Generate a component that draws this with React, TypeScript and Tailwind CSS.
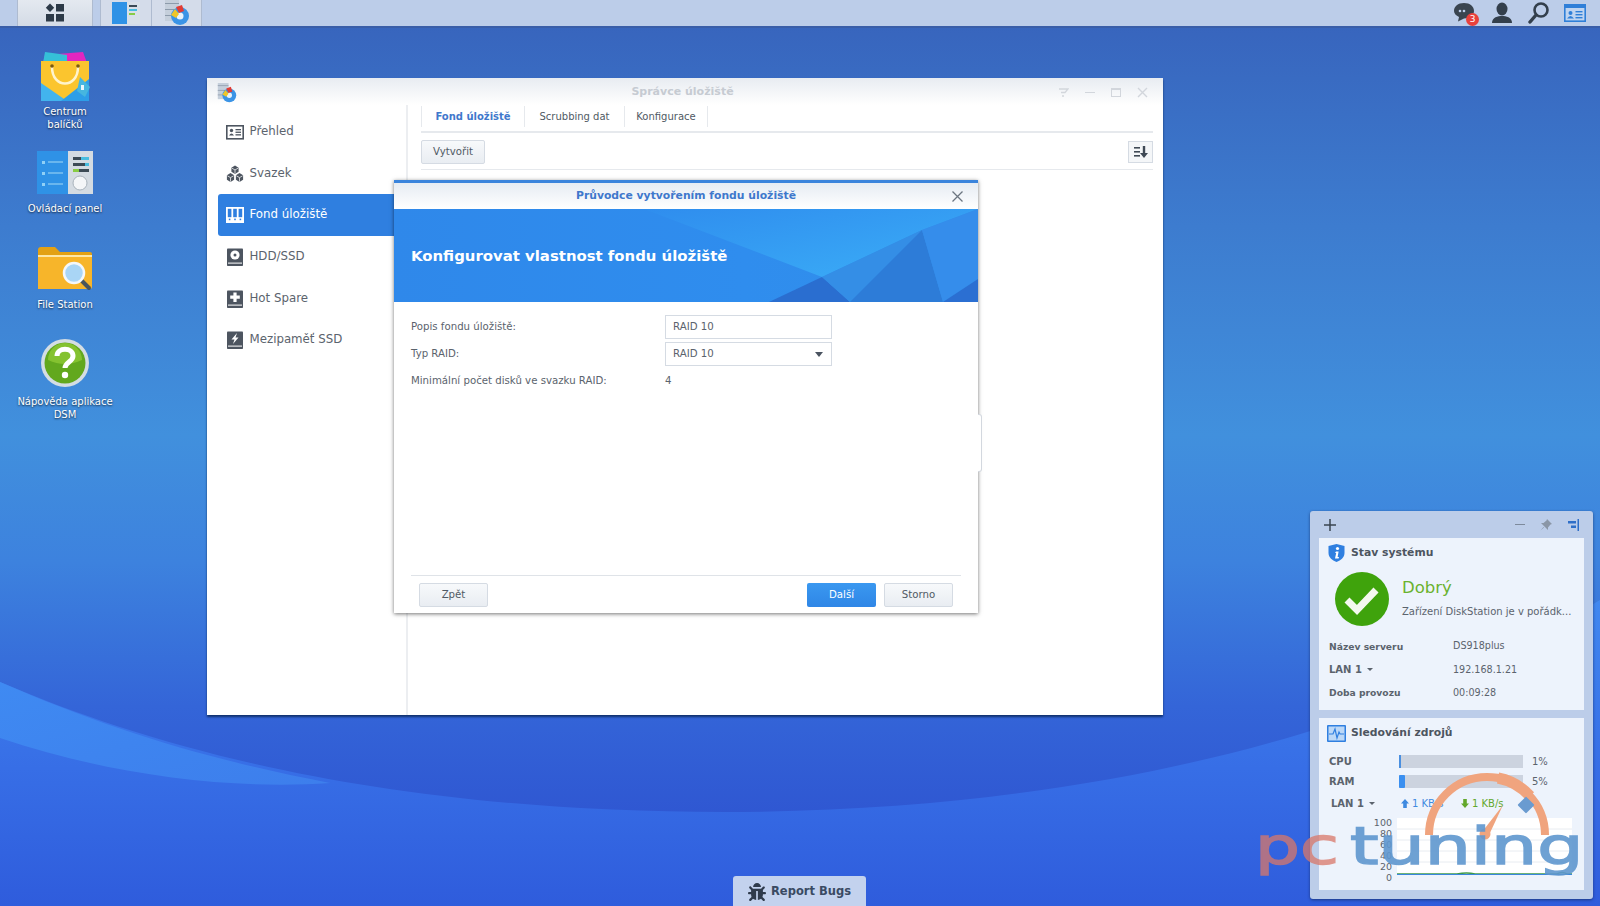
import { FaBug } from 'react-icons/fa';

const SIDEBAR_ITEMS = [
  { label: 'Přehled', icon: 'overview' },
  { label: 'Svazek', icon: 'volume' },
  { label: 'Fond úložiště', icon: 'pool', active: true },
  { label: 'HDD/SSD', icon: 'hdd' },
  { label: 'Hot Spare', icon: 'spare' },
  { label: 'Mezipaměť SSD', icon: 'cache' },
];

function Wallpaper() {
  return (
    <svg className="absolute inset-0 h-full w-full" viewBox="0 0 1600 906" preserveAspectRatio="none">
      <defs>
        <linearGradient id="sky" x1="0" y1="0" x2="0" y2="1">
          <stop offset="0" stopColor="#3762bb" />
          <stop offset="0.25" stopColor="#3d7ccf" />
          <stop offset="0.48" stopColor="#4190dd" />
          <stop offset="0.62" stopColor="#3d82de" />
          <stop offset="0.78" stopColor="#3465d8" />
          <stop offset="0.9" stopColor="#2f57d2" />
        </linearGradient>
        <linearGradient id="floor" x1="0" y1="0" x2="0" y2="1">
          <stop offset="0" stopColor="#4188f0" />
          <stop offset="0.55" stopColor="#376ee6" />
          <stop offset="1" stopColor="#2f5cdc" />
        </linearGradient>
        <linearGradient id="band" x1="0" y1="0" x2="1" y2="1">
          <stop offset="0" stopColor="#3f8af2" />
          <stop offset="1" stopColor="#3d7eec" />
        </linearGradient>
      </defs>
      <rect width="1600" height="906" fill="url(#sky)" />
      <path d="M0 682 C 170 755 400 812 724 812 C 980 812 1180 772 1320 728 C 1420 695 1520 650 1600 600 L1600 906 L0 906 Z" fill="url(#floor)" />
      <path d="M0 682 C 110 730 210 760 330 783 C 230 790 110 775 0 738 Z" fill="url(#band)" />
    </svg>
  );
}

function PackageIcon() {
  return (
    <svg width="58" height="54" viewBox="0 0 56 54">
      <path d="M8 6 L46 3 L50 14 L6 14 Z" fill="#e326c0" />
      <path d="M8 3 L30 6 L30 14 L6 14 Z" fill="#35c0d8" />
      <path d="M4 12 H52 V52 H4 Z" fill="#fbc52e" />
      <path d="M4 34 L30 52 H4 Z" fill="#42b4ee" />
      <path d="M24 52 L52 30 V52 Z" fill="#2d9ee8" />
      <path d="M15 18 C15 40 41 40 41 18" fill="none" stroke="#fff4cc" strokeWidth="2.5" />
      <circle cx="15" cy="17" r="1.8" fill="#7a5a10" />
      <circle cx="41" cy="17" r="1.8" fill="#7a5a10" />
      <path d="M43 28 L53 38 L48 48 L40 42 Z" fill="#46b6df" />
      <rect x="44" y="36" width="3" height="5" fill="#e8f6fc" />
    </svg>
  );
}

function ControlPanelIcon() {
  return (
    <svg width="56" height="44" viewBox="0 0 56 44">
      <rect x="0" y="0" width="31" height="43" fill="#2f92e6" />
      <rect x="31" y="0" width="25" height="43" fill="#d4dbe2" />
      {[10, 21, 32].map((y) => (
        <g key={y}>
          <rect x="5" y={y} width="3" height="3" fill="#8fd0f6" />
          <rect x="11" y={y} width="15" height="2" fill="#69b6ee" />
        </g>
      ))}
      <rect x="36" y="6" width="8" height="3" fill="#3c4a55" />
      <rect x="44" y="6" width="8" height="3" fill="#48bde0" />
      <rect x="36" y="12" width="12" height="3" fill="#3c4a55" />
      <rect x="48" y="12" width="4" height="3" fill="#48bde0" />
      <rect x="36" y="18" width="6" height="3" fill="#88cc44" />
      <rect x="42" y="18" width="10" height="3" fill="#3c4a55" />
      <circle cx="43" cy="32" r="7" fill="#f4f6f8" stroke="#a9b3bc" />
    </svg>
  );
}

function FolderIcon() {
  return (
    <svg width="56" height="46" viewBox="0 0 56 46">
      <path d="M1 4 Q1 1 4 1 H18 L23 6 H53 Q55 6 55 8 V12 H1 Z" fill="#e3a113" />
      <path d="M1 11 H55 V41 Q55 43 53 43 H1 Z" fill="#f7b52a" />
      <path d="M1 9 H55 V11 H1 Z" fill="#fde7a6" />
      <path d="M44 34 L52 42" stroke="#49545c" strokeWidth="4" strokeLinecap="round" />
      <circle cx="37" cy="27" r="10" fill="#a9d5f5" stroke="#f4f7f9" strokeWidth="2.5" />
    </svg>
  );
}

function HelpIcon() {
  return (
    <svg className="mb-[6px]" width="50" height="50" viewBox="0 0 50 50">
      <circle cx="25" cy="25" r="24" fill="#d4dde3" />
      <circle cx="25" cy="25" r="20.5" fill="#62a81e" />
      <path d="M8 22 A17 17 0 0 1 42 22 Q25 30 8 22 Z" fill="#84c230" />
      <path d="M17 18 C17 9 33 9 33 18 C33 24 25 24 25 30" fill="none" stroke="#fff" strokeWidth="5" />
      <circle cx="25" cy="37" r="3.2" fill="#fff" />
    </svg>
  );
}

function StorageAppIcon({ size }: { size: number }) {
  return (
    <svg width={size} height={size} viewBox="0 0 26 26">
      <rect x="1" y="0" width="14" height="21" fill="#c5cfdb" />
      <rect x="1" y="3" width="14" height="1" fill="#8d9bab" />
      <rect x="1" y="9" width="14" height="1" fill="#8d9bab" />
      <rect x="1" y="15" width="14" height="1" fill="#8d9bab" />
      <circle cx="16" cy="16" r="9" fill="#3b94e6" />
      <circle cx="16" cy="16" r="3.5" fill="#e8f2fb" />
      <path d="M7 15 L11 9 L15 14 L12 18 Z" fill="#f0c528" />
      <path d="M12 7 L18 5 L20 11 L15 13 Z" fill="#e23c34" />
    </svg>
  );
}

function SidebarIcon({ name, active }: { name: string; active?: boolean }) {
  const fg = active ? '#ffffff' : '#4d5560';
  const bg = active ? '#2f7fe0' : '#ffffff';
  if (name === 'overview') {
    return (
      <svg width="18" height="18" viewBox="0 0 18 18">
        <rect x="0.8" y="2.8" width="16.4" height="13" fill="none" stroke={fg} strokeWidth="1.6" />
        <circle cx="5.5" cy="7.5" r="1.7" fill={fg} />
        <path d="M3 12.5 Q5.5 8.5 8 12.5 Z" fill={fg} />
        <rect x="9.5" y="6" width="5.5" height="1.3" fill={fg} />
        <rect x="9.5" y="8.6" width="5.5" height="1.3" fill={fg} />
        <rect x="9.5" y="11.2" width="5.5" height="1.3" fill={fg} />
      </svg>
    );
  }
  if (name === 'volume') {
    return (
      <svg width="20" height="20" viewBox="0 0 20 20">
        <path d="M10 0.5 L14 3 V7.5 L10 10 L6 7.5 V3 Z" fill={fg} />
        <path d="M5 9 L9 11.5 V16.5 L5 19 L1 16.5 V11.5 Z" fill={fg} />
        <path d="M15 9 L19 11.5 V16.5 L15 19 L11 16.5 V11.5 Z" fill={fg} />
        <path d="M6.5 3.5 L10 5.5 L13.5 3.5 M10 5.5 V9.5 M1.5 12 L5 14 L8.5 12 M5 14 V18.5 M11.5 12 L15 14 L18.5 12 M15 14 V18.5" stroke={bg} strokeWidth="0.8" fill="none" />
      </svg>
    );
  }
  if (name === 'pool') {
    return (
      <svg width="18" height="18" viewBox="0 0 18 18">
        <rect x="0" y="1" width="18" height="16" fill={fg} />
        <rect x="1.8" y="2.8" width="3.6" height="8.4" fill={bg} />
        <rect x="7.2" y="2.8" width="3.6" height="8.4" fill={bg} />
        <rect x="12.6" y="2.8" width="3.6" height="8.4" fill={bg} />
        <rect x="2.8" y="12.6" width="1.6" height="1.6" fill={bg} />
        <rect x="8.2" y="12.6" width="1.6" height="1.6" fill={bg} />
        <rect x="13.6" y="12.6" width="1.6" height="1.6" fill={bg} />
      </svg>
    );
  }
  return (
    <svg width="18" height="18" viewBox="0 0 18 18">
      <rect x="1" y="0.5" width="16" height="17.5" rx="0.8" fill={fg} />
      <rect x="2" y="14.6" width="14" height="1" fill="#ffffff" />
      {name === 'hdd' && (
        <>
          <circle cx="9" cy="7" r="4.6" fill="#ffffff" />
          <circle cx="9" cy="7" r="1.5" fill={fg} />
        </>
      )}
      {name === 'spare' && <path d="M7.4 2.5 H10.6 V5.6 H13.8 V8.8 H10.6 V12 H7.4 V8.8 H4.2 V5.6 H7.4 Z" fill="#ffffff" />}
      {name === 'cache' && <path d="M11 2 L5.5 8.5 H8.5 L7 13 L12.5 6.5 H9.5 Z" fill="#ffffff" />}
    </svg>
  );
}

function DesktopIcon({ label, children }: { label: string; children: React.ReactNode }) {
  return (
    <div className="flex h-[96.7px] w-[130px] flex-col items-center">
      <div className="flex h-[58px] items-center">{children}</div>
      <div className="text-center text-[10px] leading-[13px] whitespace-pre-line text-white [text-shadow:0_1px_2px_rgba(0,0,0,0.7)]">
        {label}
      </div>
    </div>
  );
}

function Taskbar() {
  return (
    <div className="relative flex h-[28px] items-stretch justify-between border-b-2 border-[#3a5ea8] bg-[#bccde9]">
      <div className="flex items-stretch pl-[17px]">
        <div className="flex w-[76px] items-center justify-center border-x border-[#aebbd0] bg-gradient-to-b from-[#e4e9f0] to-[#d4dbe6]">
          <svg width="20" height="20" viewBox="0 0 20 20" fill="#2d3a48">
            <path d="M5 0.5 L9.2 4.7 L5 8.9 L0.8 4.7 Z" />
            <rect x="11" y="1" width="8" height="7.5" />
            <rect x="1" y="11" width="8" height="7.5" />
            <rect x="11" y="11" width="8" height="7.5" />
          </svg>
        </div>
        <div className="ml-[7px] flex w-[52px] items-center justify-center border-x border-[#aebbd0] bg-[#d4dcea]">
          <svg width="28" height="22" viewBox="0 0 28 22">
            <rect width="15" height="22" fill="#2f92e6" />
            <rect x="15" width="13" height="22" fill="#d9e0e8" />
            <rect x="17" y="3" width="8" height="2" fill="#3c4a55" />
            <rect x="17" y="7" width="8" height="2" fill="#48bde0" />
            <rect x="17" y="11" width="6" height="2" fill="#88cc44" />
          </svg>
        </div>
        <div className="flex w-[50px] items-center justify-center border-r border-[#aebbd0] bg-[#d4dcea]">
          <StorageAppIcon size={26} />
        </div>
      </div>
      <div className="flex items-center gap-[13px] pr-[14px]">
        <div className="relative h-[22px] w-[24px]">
          <svg width="22" height="20" viewBox="0 0 22 20" fill="#3a4550">
            <path d="M11 1 C17 1 21 4.5 21 9 C21 13.5 17 16.5 11 16.5 L5 19.5 L6 15 C3 13.5 1 11.5 1 9 C1 4.5 5 1 11 1 Z" />
            <circle cx="7" cy="9" r="1.3" fill="#bccde9" />
            <circle cx="11" cy="9" r="1.3" fill="#bccde9" />
          </svg>
          <span className="absolute right-[-2px] bottom-[-2px] flex h-[13px] w-[13px] items-center justify-center rounded-full bg-[#e8413c] text-[9px] leading-none text-white">
            3
          </span>
        </div>
        <svg width="24" height="22" viewBox="0 0 24 22" fill="#333f4c">
          <ellipse cx="12" cy="7" rx="5.5" ry="6.5" />
          <path d="M2 21 C2 15 8 14 12 14 C16 14 22 15 22 21 Z" />
        </svg>
        <svg width="24" height="22" viewBox="0 0 24 22" fill="none" stroke="#333f4c">
          <circle cx="14" cy="8" r="6.5" strokeWidth="2.6" />
          <path d="M9 13 L3 20" strokeWidth="3.4" strokeLinecap="round" />
        </svg>
        <svg width="22" height="20" viewBox="0 0 22 20">
          <rect x="0.8" y="1.8" width="20.4" height="16.4" fill="#bfd4f0" stroke="#2f7fd8" strokeWidth="1.6" />
          <rect x="1" y="2" width="20" height="3" fill="#2f7fd8" />
          <circle cx="6.5" cy="10" r="2" fill="#2f7fd8" />
          <path d="M3 15.5 Q6.5 10.5 10 15.5 Z" fill="#2f7fd8" />
          <rect x="11.5" y="8" width="7" height="1.4" fill="#2f7fd8" />
          <rect x="11.5" y="11" width="7" height="1.4" fill="#2f7fd8" />
          <rect x="11.5" y="14" width="7" height="1.4" fill="#2f7fd8" />
        </svg>
      </div>
    </div>
  );
}

function GrayButton({ label, className }: { label: string; className: string }) {
  return (
    <div
      className={`flex h-[24px] items-center justify-center rounded-[2px] border border-[#d5dbe3] bg-gradient-to-b from-[#f7f9fb] to-[#e9edf2] text-[10.2px] text-[#505a64] ${className}`}
    >
      {label}
    </div>
  );
}

function StorageWindow() {
  return (
    <div className="absolute top-[78px] left-[207px] flex h-[637px] w-[956px] flex-col bg-white shadow-[0_2px_2px_rgba(10,40,90,0.85)]">
      <div className="flex h-[27px] shrink-0 items-center bg-gradient-to-b from-[#e8ecf1] to-white pt-[2px] pr-[15px] pl-[10px]">
        <div className="w-[110px]">
          <StorageAppIcon size={20} />
        </div>
        <span className="flex-1 text-center text-[11px] font-bold text-[#c6cbd2]">Správce úložiště</span>
        <div className="flex w-[110px] items-center justify-end gap-[16px]">
          <svg width="11" height="11" viewBox="0 0 11 11" fill="none" stroke="#d2d6dc" strokeWidth="1.3">
            <path d="M1 2 H10 L7 5.5 H3 M4 9 H6" />
          </svg>
          <div className="h-[1.5px] w-[10px] bg-[#d2d6dc]" />
          <div className="h-[9px] w-[10px] border border-t-2 border-[#d2d6dc]" />
          <svg width="11" height="11" viewBox="0 0 11 11" stroke="#d2d6dc" strokeWidth="1.4">
            <path d="M1 1 L10 10 M10 1 L1 10" />
          </svg>
        </div>
      </div>
      <div className="flex min-h-0 flex-1">
        <div className="flex w-[201px] shrink-0 flex-col border-r-2 border-[#eceef1] pt-[6px] pl-[10.5px]">
          {SIDEBAR_ITEMS.map((item) => (
            <div
              key={item.label}
              className={`flex h-[41.7px] w-[190px] items-center gap-[6px] rounded-l-[3px] pl-[8px] text-[11.8px] ${
                item.active ? 'bg-[#2f7fe0] text-white' : 'text-[#5b636d]'
              }`}
            >
              <span className="flex w-[18px] justify-center">
                <SidebarIcon name={item.icon} active={item.active} />
              </span>
              {item.label}
            </div>
          ))}
        </div>
        <div className="flex min-w-0 flex-1 flex-col pr-[10px] pl-[13px]">
          <div className="flex h-[28px] shrink-0 items-center border-b-2 border-[#e6e9ed] pb-[3px] text-[10px] text-[#505a64]">
            <span className="flex h-[21px] w-[103px] items-center justify-center border-l border-[#e6e9ed] font-bold text-[#3f78cc]">
              Fond úložiště
            </span>
            <span className="flex h-[21px] w-[100px] items-center justify-center border-l border-[#e6e9ed]">
              Scrubbing dat
            </span>
            <span className="flex h-[21px] w-[84px] items-center justify-center border-x border-[#e6e9ed]">
              Konfigurace
            </span>
          </div>
          <div className="flex h-[37px] shrink-0 items-center justify-between border-b border-[#e6e9ed] pt-[1px]">
            <GrayButton label="Vytvořit" className="w-[64px]" />
            <div className="flex h-[22px] w-[25px] items-center justify-center border border-[#d5dbe3] bg-[#f4f6f8]">
              <svg width="14" height="12" viewBox="0 0 14 12" fill="#3f4955">
                <rect x="0" y="1" width="6" height="1.6" />
                <rect x="0" y="5" width="6" height="1.6" />
                <rect x="0" y="9" width="6" height="1.6" />
                <path d="M8.8 0 H11.2 V7 H14 L10 12 L6 7 H8.8 Z" />
              </svg>
            </div>
          </div>
        </div>
      </div>
    </div>
  );
}

function BannerArt() {
  return (
    <svg className="absolute inset-0 h-full w-full" viewBox="0 0 584 93" preserveAspectRatio="none">
      <defs>
        <linearGradient id="bannerBase" x1="0" y1="0" x2="1" y2="0">
          <stop offset="0" stopColor="#2f88ea" />
          <stop offset="0.6" stopColor="#2f8dee" />
          <stop offset="1" stopColor="#328fe9" />
        </linearGradient>
        <linearGradient id="bannerLight" x1="0" y1="0" x2="1" y2="1">
          <stop offset="0" stopColor="#2f8dee" />
          <stop offset="0.75" stopColor="#38a6f5" />
          <stop offset="1" stopColor="#3aa8f6" />
        </linearGradient>
      </defs>
      <rect width="584" height="93" fill="url(#bannerBase)" />
      <path d="M250 0 L584 0 L528 21 L428 68 Z" fill="url(#bannerLight)" />
      <path d="M375 93 L428 68 L456 93 Z" fill="#2a6ed0" />
      <path d="M428 68 L528 21 L456 93 Z" fill="#348ee6" />
      <path d="M456 93 L528 21 L549 93 Z" fill="#2d7cd8" />
      <path d="M528 21 L584 0 L584 70 L549 93 Z" fill="#358deb" />
      <path d="M549 93 L584 70 L584 93 Z" fill="#2b6fd2" />
    </svg>
  );
}

function WizardDialog() {
  return (
    <div className="absolute top-[180px] left-[394px] flex h-[433px] w-[584px] flex-col border-t-[3px] border-[#3a84dc] bg-white shadow-[0_1px_4px_rgba(0,0,0,0.55)]">
      <div className="relative flex h-[26px] shrink-0 items-center justify-center bg-gradient-to-b from-[#e6ecf3] to-white text-[10.8px] font-bold text-[#3f78cc]">
        Průvodce vytvořením fondu úložiště
        <svg className="absolute top-[8px] right-[15px]" width="11" height="11" viewBox="0 0 11 11" stroke="#6c7580" strokeWidth="1.3">
          <path d="M0.5 0.5 L10.5 10.5 M10.5 0.5 L0.5 10.5" />
        </svg>
      </div>
      <div className="relative flex h-[93px] shrink-0 items-center pt-[2px] pl-[17px]">
        <BannerArt />
        <span className="relative text-[14.9px] font-bold text-white">Konfigurovat vlastnost fondu úložiště</span>
      </div>
      <div className="flex flex-1 flex-col px-[17px] text-[10.2px] text-[#5b636d]">
        <div className="mt-[13px] flex h-[24px] items-center">
          <span className="w-[254px]">Popis fondu úložiště:</span>
          <div className="flex h-[24px] w-[167px] items-center border border-[#d5dbe3] pl-[7px]">RAID 10</div>
        </div>
        <div className="mt-[3px] flex h-[24px] items-center">
          <span className="w-[254px]">Typ RAID:</span>
          <div className="flex h-[24px] w-[167px] items-center justify-between border border-[#d5dbe3] pr-[8px] pl-[7px]">
            RAID 10
            <span className="h-0 w-0 border-x-[4.5px] border-t-[5px] border-x-transparent border-t-[#4a5360]" />
          </div>
        </div>
        <div className="mt-[3px] flex h-[24px] items-center">
          <span className="w-[254px]">Minimální počet disků ve svazku RAID:</span>
          <span>4</span>
        </div>
        <div className="mt-auto flex h-[38px] items-center justify-between border-t border-[#dfe3e8] px-[8px] pt-[1px]">
          <GrayButton label="Zpět" className="w-[69px]" />
          <div className="flex gap-[8px]">
            <div className="flex h-[24px] w-[69px] items-center justify-center rounded-[2px] bg-gradient-to-b from-[#3a98f0] to-[#2f86e6] text-[10.2px] text-white">
              Další
            </div>
            <GrayButton label="Storno" className="w-[69px]" />
          </div>
        </div>
      </div>
    </div>
  );
}

function LanLabel({ className }: { className: string }) {
  return (
    <span className={`flex items-center gap-[5px] font-bold ${className}`}>
      LAN 1
      <span className="h-0 w-0 border-x-[3px] border-t-[3px] border-x-transparent border-t-[#5b636d]" />
    </span>
  );
}

function ResourceChart() {
  const ticks = ['100', '80', '60', '40', '20', '0'];
  return (
    <div className="mt-[3px] flex items-stretch pl-[42px]">
      <div className="flex h-[66px] w-[36px] flex-col justify-between pr-[5px] text-right text-[9.5px] leading-[11px] text-[#5b636d]">
        {ticks.map((tick) => (
          <span key={tick}>{tick}</span>
        ))}
      </div>
      <svg width="175" height="60" viewBox="0 0 175 60" className="mt-[1px]">
        <rect width="175" height="56" fill="#ffffff" />
        {[11, 22, 33, 44].map((y) => (
          <line key={y} x1="0" x2="175" y1={y} y2={y} stroke="#e8ecf1" />
        ))}
        <path d="M0 56 H60 Q70 54 78 56 H120 H160 Q165 53 170 56 H175" fill="none" stroke="#3f9a4a" strokeWidth="1.5" />
        <path d="M0 56.5 H175" stroke="#3a86dc" strokeWidth="1" />
      </svg>
    </div>
  );
}

function SystemWidget() {
  return (
    <div className="absolute top-[511px] left-[1310px] flex h-[388px] w-[283px] flex-col rounded-[3px] bg-[#bccde9] px-[9px] pb-[9px] shadow-[0_1px_3px_rgba(20,40,90,0.7)]">
      <div className="flex h-[27px] shrink-0 items-center justify-between pr-[5px] pl-[5px]">
        <svg width="12" height="12" viewBox="0 0 12 12" stroke="#3a4550" strokeWidth="1.5">
          <path d="M6 0 V12 M0 6 H12" />
        </svg>
        <div className="flex items-center gap-[15px]">
          <div className="h-[1.5px] w-[10px] bg-[#7d8a9c]" />
          <svg width="12" height="12" viewBox="0 0 12 12" fill="#8a96a6">
            <path d="M7 0 L12 5 L10.5 5.5 L8 8.5 L8 11 L1 4 L3.5 4 L6.5 1.5 Z M3.5 8 L0.5 11.5 L4 8.5 Z" />
          </svg>
          <svg width="12" height="12" viewBox="0 0 12 12" fill="#2f6fc8">
            <rect x="10.5" y="0" width="1.5" height="12" />
            <rect x="1" y="2" width="8" height="2.5" />
            <rect x="4" y="6.5" width="5" height="2.5" />
          </svg>
        </div>
      </div>

      <div className="flex h-[172px] shrink-0 flex-col bg-[#edf3fc] px-[8px] text-[9.6px] text-[#5b636d]">
        <div className="flex h-[30px] items-center gap-[6px] pl-[1px] text-[10.8px] font-bold text-[#4d5560]">
          <svg width="17" height="18" viewBox="0 0 17 18">
            <path d="M8.5 0 L16.5 2 V9 C16.5 13 13 16.5 8.5 18 C4 16.5 0.5 13 0.5 9 V2 Z" fill="#2f7fe0" />
            <circle cx="9.5" cy="4.5" r="1.6" fill="#fff" />
            <path d="M8 7.5 H10.6 L9.6 13 H11 L10.6 14.5 H7 L8.2 9 H7 Z" fill="#fff" />
          </svg>
          Stav systému
        </div>
        <div className="flex h-[62px] items-center gap-[13px] pl-[8px]">
          <svg width="54" height="54" viewBox="0 0 54 54" className="shrink-0">
            <circle cx="27" cy="27" r="27" fill="#3fa30c" />
            <path d="M12 28 L22 38 L41 18" fill="none" stroke="#f4f9ee" strokeWidth="7" />
          </svg>
          <div className="min-w-0 flex-1">
            <div className="-mt-[3px] text-[16.5px] leading-[24px] text-[#6ab22e]">Dobrý</div>
            <div className="mt-[5px] text-[10px] leading-[14px] whitespace-nowrap">Zařízení DiskStation je v pořádk...</div>
          </div>
        </div>
        <div className="mt-[5px] grid grid-cols-[124px_1fr] items-center pl-[2px] [grid-auto-rows:23.2px]">
          <span className="text-[9.2px] font-bold">Název serveru</span>
          <span>DS918plus</span>
          <LanLabel className="text-[10px]" />
          <span>192.168.1.21</span>
          <span className="text-[9.2px] font-bold">Doba provozu</span>
          <span>00:09:28</span>
        </div>
      </div>

      <div className="mt-[8px] flex min-h-0 flex-1 flex-col bg-[#edf3fc] pr-[8px] text-[10px] text-[#5b636d]">
        <div className="flex h-[30px] items-center gap-[5px] pl-[8px] text-[10.8px] font-bold text-[#4d5560]">
          <svg width="19" height="17" viewBox="0 0 19 17">
            <rect width="19" height="17" rx="1" fill="#2f7fe0" />
            <rect x="1.5" y="1.5" width="16" height="14" fill="#bcd8f7" />
            <path d="M2 9 H6 L8 4 L10 13 L12 7 L13 9 H17" fill="none" stroke="#2f7fe0" strokeWidth="1.2" />
          </svg>
          Sledování zdrojů
        </div>
        <div className="mt-[3px] grid grid-cols-[70px_124px_1fr] items-center pl-[10px] [grid-auto-rows:20px]">
          <span className="font-bold">CPU</span>
          <div className="h-[13px] bg-[#ccd3df]">
            <div className="h-full w-[2px] bg-[#4a8fe0]" />
          </div>
          <span className="pl-[9px]">1%</span>
          <span className="font-bold">RAM</span>
          <div className="h-[13px] bg-[#ccd3df]">
            <div className="h-full w-[6px] rounded-[1px] bg-[#3a8ff0]" />
          </div>
          <span className="pl-[9px]">5%</span>
        </div>
        <div className="mt-[1px] flex h-[22px] items-center pl-[12px]">
          <LanLabel className="w-[70px]" />
          <span className="flex w-[60px] items-center gap-[3px] text-[#3f8ae0]">
            <svg width="8" height="9" viewBox="0 0 8 9" fill="#3f8ae0">
              <path d="M4 0 L8 4.5 H5.8 V9 H2.2 V4.5 H0 Z" />
            </svg>
            1 KB/s
          </span>
          <span className="flex items-center gap-[3px] text-[#62a82c]">
            <svg width="8" height="9" viewBox="0 0 8 9" fill="#62a82c">
              <path d="M4 9 L8 4.5 H5.8 V0 H2.2 V4.5 H0 Z" />
            </svg>
            1 KB/s
          </span>
        </div>
        <ResourceChart />
      </div>
    </div>
  );
}

function Watermark() {
  return (
    <div className="pointer-events-none absolute top-[804px] left-[1258px] h-[90px] w-[330px]">
      <svg className="absolute inset-0 overflow-visible" width="330" height="90" viewBox="0 0 330 90" fill="none">
        <path d="M171 31 A58 58 0 0 1 287 31" stroke="#f0a47e" strokeWidth="8" />
        <path d="M240 -26 A58 58 0 0 1 272 -8" stroke="#f0a47e" strokeWidth="11" />
        <rect x="-6" y="-6" width="12" height="12" rx="1" transform="translate(268 1) rotate(45)" fill="#6a9bd0" />
        <path d="M224 28 L245 1 L231 31 Z" fill="#f0a47e" />
        <circle cx="227" cy="30" r="5.5" fill="#f0a47e" />
      </svg>
      <span className="absolute top-[-3px] left-[-3px] origin-left scale-x-[1.36] text-[52px] leading-[90px] text-[#d9786a] opacity-75 [-webkit-text-stroke:1.5px_#d9786a]">
        pc
      </span>
      <span className="absolute top-[-3px] left-[92px] origin-left scale-x-[1.4] text-[52px] leading-[90px] text-[#5f97cf] opacity-90 [-webkit-text-stroke:1.5px_#5f97cf]">
        tuning
      </span>
    </div>
  );
}

export default function App() {
  return (
    <div className="relative h-[906px] w-[1600px] overflow-hidden font-['DejaVu_Sans',sans-serif]">
      <Wallpaper />
      <Taskbar />
      <div className="relative flex w-[130px] flex-col pt-[19px]">
        <DesktopIcon label={'Centrum\nbalíčků'}>
          <PackageIcon />
        </DesktopIcon>
        <DesktopIcon label="Ovládací panel">
          <ControlPanelIcon />
        </DesktopIcon>
        <DesktopIcon label="File Station">
          <FolderIcon />
        </DesktopIcon>
        <DesktopIcon label={'Nápověda aplikace\nDSM'}>
          <HelpIcon />
        </DesktopIcon>
      </div>
      <StorageWindow />
      <WizardDialog />
      <div className="absolute top-[414px] left-[978px] h-[58px] w-[4px] rounded-r-[3px] border border-l-0 border-[#d3d8df] bg-white" />
      <SystemWidget />
      <Watermark />
      <div className="absolute bottom-0 left-[733px] flex h-[30px] w-[133px] items-center justify-center gap-[5px] rounded-t-[3px] bg-[#c3d2ee] pt-[2px] text-[11.5px] font-bold text-[#3a4a63]">
        <FaBug size={18} color="#2f3b4c" />
        Report Bugs
      </div>
    </div>
  );
}
